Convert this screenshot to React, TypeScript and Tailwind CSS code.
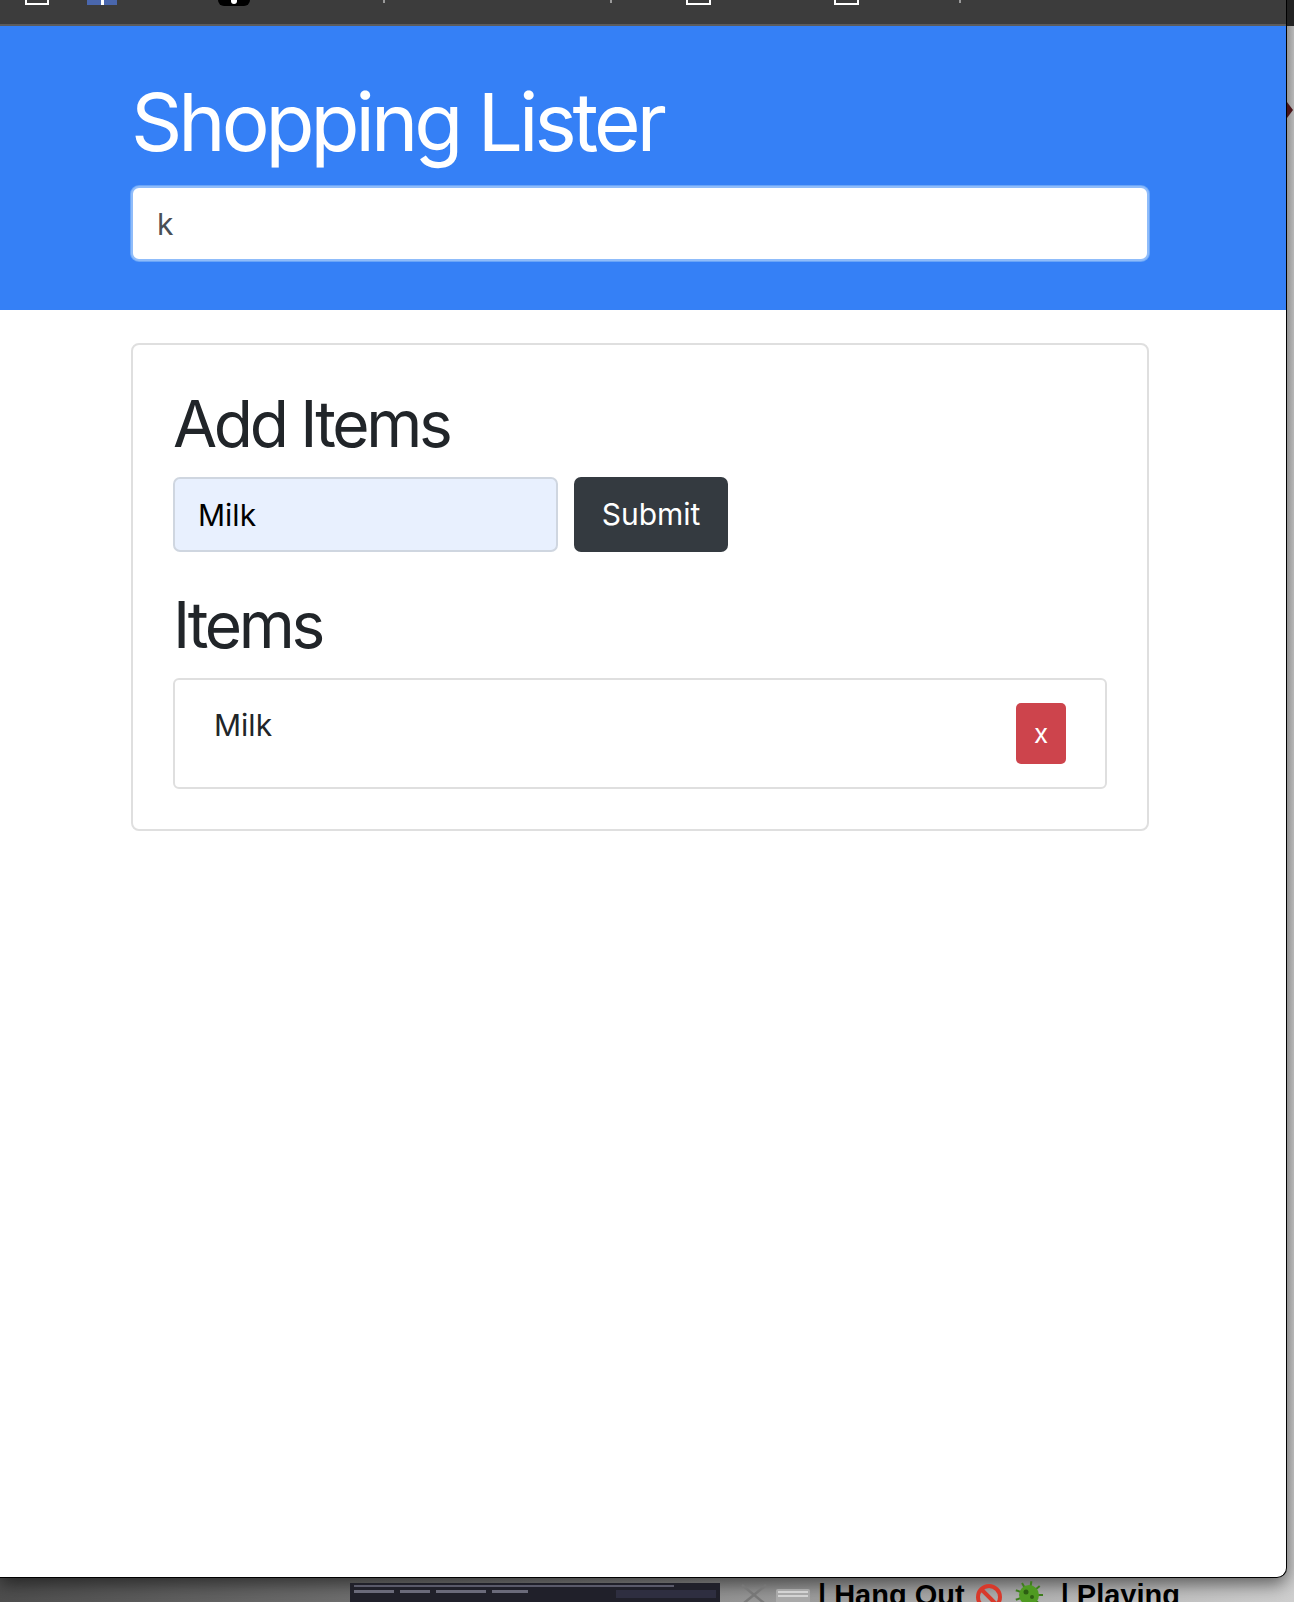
import { useState } from "react";

/** 상단 북마크 바에 잘려서 보이는 아이콘들 (아래쪽 끝만 보임) */
function BookmarkBar() {
  return (
    <div className="flex h-[24px] items-start bg-[#3c3c3c]">
      <span className="ml-[25px] h-[5px] w-[24px] border-x-2 border-b-2 border-white" />
      <span className="ml-[38px] h-[5px] w-[30px] bg-[#4a67ad]">
        <span className="ml-[14px] block h-[5px] w-[3px] bg-white" />
      </span>
      <span className="ml-[101px] h-[6px] w-[32px] rounded-b-full bg-black">
        <span className="ml-[13px] block h-[4px] w-[6px] rounded-b-full bg-white" />
      </span>
      <span className="ml-[133px] h-[3px] w-[2px] bg-[#9a9a9a]" />
      <span className="ml-[225px] h-[3px] w-[2px] bg-[#9a9a9a]" />
      <span className="ml-[74px] h-[5px] w-[25px] border-x-2 border-b-2 border-white" />
      <span className="ml-[123px] h-[5px] w-[25px] border-x-2 border-b-2 border-white" />
      <span className="ml-[100px] h-[3px] w-[2px] bg-[#9a9a9a]" />
    </div>
  );
}

function NoSign() {
  return (
    <svg width="28" height="28" viewBox="0 0 28 28">
      <circle cx="14" cy="14" r="11" fill="none" stroke="#d8392b" strokeWidth="4" />
      <line x1="6" y1="6" x2="22" y2="22" stroke="#d8392b" strokeWidth="4" />
    </svg>
  );
}

function Microbe() {
  return (
    <svg width="32" height="30" viewBox="0 0 32 30">
      {[0, 40, 80, 120, 160, 200, 240, 280, 320].map((a) => (
        <line
          key={a}
          x1="16"
          y1="16"
          x2={16 + 14 * Math.cos((a * Math.PI) / 180)}
          y2={16 + 14 * Math.sin((a * Math.PI) / 180)}
          stroke="#3d7d1c"
          strokeWidth="2"
        />
      ))}
      <circle cx="16" cy="16" r="10" fill="#4f9a22" />
      <circle cx="13" cy="13" r="2.5" fill="#2c5e12" />
      <circle cx="19" cy="18" r="2" fill="#2c5e12" />
    </svg>
  );
}

/** 화면 아래쪽 독/작업표시줄 조각 */
function Taskbar() {
  return (
    <div className="flex h-[24px] items-start pt-[5px] font-['Liberation_Sans',sans-serif]">
      <div className="ml-[350px] flex h-[19px] w-[370px] flex-col gap-[3px] bg-[#20202a] px-[4px] pt-[2px]">
        <div className="h-[2px] w-[320px] bg-[#5a5a6a]" />
        <div className="flex gap-[6px]">
          <span className="h-[3px] w-[40px] bg-[#6a6a7a]" />
          <span className="h-[3px] w-[30px] bg-[#6a6a7a]" />
          <span className="h-[3px] w-[50px] bg-[#6a6a7a]" />
          <span className="h-[3px] w-[36px] bg-[#6a6a7a]" />
          <span className="ml-auto h-[8px] w-[100px] bg-[#2e2e40]" />
        </div>
      </div>
      <svg className="ml-[18px]" width="32" height="20" viewBox="0 0 32 20">
        <line x1="4" y1="2" x2="26" y2="20" stroke="#777" strokeWidth="2.5" />
        <line x1="28" y1="2" x2="6" y2="20" stroke="#777" strokeWidth="2.5" />
      </svg>
      <div className="ml-[6px] mt-[6px] flex h-[14px] w-[34px] flex-col gap-[2px] rounded-t-[2px] bg-[#a9a9a9] p-[2px]">
        <span className="h-[2px] bg-[#d4d4d4]" />
        <span className="h-[2px] bg-[#d4d4d4]" />
      </div>
      <span className="ml-[8px] -mt-[4px] text-[29px] font-bold leading-[32px] text-black">
        | Hang Out
      </span>
      <span className="ml-[10px]">
        <NoSign />
      </span>
      <span className="ml-[10px] -mt-[4px]">
        <Microbe />
      </span>
      <span className="ml-[16px] -mt-[4px] text-[29px] font-bold leading-[32px] text-black">
        | Playing
      </span>
    </div>
  );
}

export default function App() {
  const [search, setSearch] = useState("k");
  const [newItem, setNewItem] = useState("Milk");
  const [items, setItems] = useState<string[]>(["Milk"]);

  const visible = items.filter((item) =>
    item.toLowerCase().includes(search.toLowerCase())
  );

  return (
    <div className="relative h-[1602px] w-[1294px] overflow-hidden bg-gradient-to-r from-[#4e4e4e] via-[#8c8c8c] to-[#cfcfcf] font-['Inter',sans-serif]">
      <div className="flex">
        {/* 브라우저 창 */}
        <div className="flex h-[1578px] w-[1287px] flex-col overflow-hidden rounded-br-[10px] border-r border-b border-black bg-white shadow-[0_6px_18px_rgba(0,0,0,0.55)]">
          <BookmarkBar />
          <div className="h-[2px] bg-[#5c5c5c]" />

          {/* 헤더 */}
          <header className="bg-[#3580f6] pt-[48px] pb-[49px]">
            <div className="ml-[131px] w-[1018px]">
              <h1 className="mb-[16px] text-[80px] leading-[96px] font-normal tracking-[-4px] text-white">
                Shopping Lister
              </h1>
              <input
                value={search}
                onChange={(e) => setSearch(e.target.value)}
                className="block h-[75px] w-full rounded-[8px] border-2 border-[#8fbcfa] bg-white px-[24px] text-[30px] text-[#495057] shadow-[0_0_0_1px_#6aa5f8] outline-none"
              />
            </div>
          </header>

          {/* 본문 카드 */}
          <main className="ml-[131px] mt-[33px] w-[1018px] rounded-[8px] border-2 border-[#dfdfdf] p-[40px]">
            <h2 className="mb-[15px] text-[64px] leading-[77px] font-normal tracking-[-3.3px] text-[#212529]">
              Add Items
            </h2>
            <form
              className="flex gap-[16px]"
              onSubmit={(e) => {
                e.preventDefault();
                if (newItem.trim()) setItems([...items, newItem.trim()]);
              }}
            >
              <input
                value={newItem}
                onChange={(e) => setNewItem(e.target.value)}
                className="h-[75px] w-[385px] rounded-[7px] border-2 border-[#cfd6e0] bg-[#e8f0fe] px-[23px] text-[30px] text-black outline-none"
              />
              <button
                type="submit"
                className="h-[75px] w-[154px] rounded-[7px] bg-[#343a40] text-[30px] text-white"
              >
                Submit
              </button>
            </form>

            <h2 className="mt-[34px] mb-[15px] text-[64px] leading-[77px] font-normal tracking-[-3.3px] text-[#212529]">
              Items
            </h2>
            <ul className="rounded-[6px] border-2 border-[#dfdfdf]">
              {visible.map((item, i) => (
                <li
                  key={item + i}
                  className="flex items-start justify-between px-[39px] py-[23px] text-[30px] leading-[45px] text-[#212529]"
                >
                  <span>{item}</span>
                  <button
                    type="button"
                    onClick={() => setItems(items.filter((_, j) => j !== i))}
                    className="h-[61px] w-[50px] rounded-[5px] bg-[#cd444c] text-[26px] leading-none text-white"
                  >
                    x
                  </button>
                </li>
              ))}
            </ul>
          </main>
        </div>

        {/* 창 오른쪽 바깥 */}
        <div className="flex w-[7px] flex-col">
          <div className="h-[26px] bg-[#222]" />
          <div className="mt-[76px] h-[16px] w-[6px] bg-[#4a1418] [clip-path:polygon(0_0,100%_50%,0_100%)]" />
        </div>
      </div>

      <Taskbar />
    </div>
  );
}
